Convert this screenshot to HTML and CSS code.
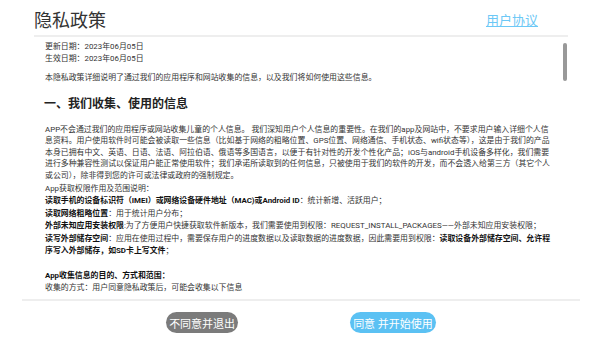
FILE: index.html
```html
<!DOCTYPE html>
<html>
<head>
    <meta charset="UTF-8">
    <title>隐私政策</title>
    <link rel="stylesheet" href="styles.css">
</head>
<body>
    <div class="page">
        <!-- Title bar -->
        <header class="topbar">
            <h1 class="title">隐私政策</h1>
            <a class="agreement-link" href="#">用户协议</a>
        </header>

        <!-- Scrollable policy text -->
        <main class="policy">
            <div class="dates">
                更新日期：2023年06月05日<br>
                生效日期：2023年06月05日
            </div>
            <p class="intro">本隐私政策详细说明了通过我们的应用程序和网站收集的信息，以及我们将如何使用这些信息。</p>

            <h2 class="section-title">一、我们收集、使用的信息</h2>
            <p class="para">
                APP不会通过我们的应用程序或网站收集儿童的个人信息。 我们深知用户个人信息的重要性。在我们的app及网站中，不要求用户输入详细个人信<br>
                息资料。用户使用软件时可能会被读取一些信息（比如基于网络的粗略位置、GPS位置、网络通信、手机状态、wifi状态等），这是由于我们的产品<br>
                本身已拥有中文、英语、日语、法语、阿拉伯语、俄语等多国语言，以便于有针对性的开发个性化产品；iOS与android手机设备多样化，我们需要<br>
                进行多种兼容性测试以保证用户能正常使用软件；我们承诺所读取到的任何信息，只被使用于我们的软件的开发，而不会透入给第三方（其它个人<br>
                或公司），除非得到您的许可或法律或政府的强制规定。
            </p>

            <div class="perms">
                App获取权限作用及范围说明：<br>
                <b>读取手机的设备标识符（IMEI）或网络设备硬件地址（MAC)或Android ID</b>：统计新增、活跃用户；<br>
                <b>读取网络粗略位置</b>：用于统计用户分布；<br>
                <b>外部未知应用安装权限</b>:为了方便用户快捷获取软件新版本，我们需要使用到权限：REQUEST_INSTALL_PACKAGES——外部未知应用安装权限；<br>
                <b>读写外部储存空间</b>：应用在使用过程中，需要保存用户的进度数据以及读取数据的进度数据，因此需要用到权限：<b>读取设备外部储存空间、允许程<br>
                序写入外部储存，如SD卡上写文件</b>；<br>
                <br>
                <b>App收集信息的目的、方式和范围：</b><br>
                收集的方式：用户同意隐私政策后，可能会收集以下信息
            </div>

            <div class="scroll-thumb"></div>
        </main>

        <!-- Bottom actions -->
        <footer class="actions">
            <button class="btn btn-decline">不同意并退出</button>
            <button class="btn btn-accept">同意 并开始使用</button>
        </footer>
    </div>
</body>
</html>
```

FILE: styles.css
```css
body {
    margin: 0;
    padding: 0;
    font-family: Roboto, 'Noto Sans CJK SC', sans-serif;
    background: #fff;
    color: #333;
}

.page {
    display: flex;
    flex-direction: column;
    width: 600px;
    height: 337px;
    overflow: hidden;
}

.topbar {
    display: flex;
    align-items: center;
    justify-content: space-between;
    height: 28px;
    padding: 7px 30px 0 0;
    margin: 0 32px 0 34px;
    border-bottom: 2px solid #eeeeee;
}

.title {
    margin: 0;
    font-size: 18px;
    font-weight: normal;
    line-height: 18px;
    color: #333;
}

.agreement-link {
    font-size: 13px;
    line-height: 14px;
    color: #6cc8f6;
    text-decoration: underline;
}

.policy {
    position: relative;
    flex: 1;
    overflow: hidden;
    padding: 4px 30px 0 45px;
    font-size: 7.9px;
    line-height: 11.5px;
    white-space: nowrap;
}

.dates {
    margin: 0;
}

.intro {
    margin: 8px 0 0;
}

.section-title {
    margin: 11px 0 11px -1px;
    font-size: 12px;
    line-height: 18px;
    font-weight: bold;
    color: #222;
}

.para {
    margin: 0;
}

.perms {
    margin-top: 2px;
    line-height: 12.4px;
}

.perms b {
    color: #111;
}

.scroll-thumb {
    position: absolute;
    top: 6px;
    right: 33px;
    width: 4px;
    height: 38px;
    background: #999;
    border-radius: 2px;
}

.actions {
    display: flex;
    justify-content: center;
    align-items: flex-start;
    gap: 112px;
    height: 38px;
    padding-top: 11px;
    margin: 0 20px 0 22px;
    border-top: 2px solid #eeeeee;
    box-sizing: border-box;
}

.btn {
    height: 21px;
    padding: 0 3px;
    border: none;
    border-radius: 11px;
    font-family: Roboto, 'Noto Sans CJK SC', sans-serif;
    font-size: 11px;
    color: #fff;
    cursor: pointer;
}

.btn-decline {
    background: #7b7b7b;
}

.btn-accept {
    background: #5bc1f3;
}
```
